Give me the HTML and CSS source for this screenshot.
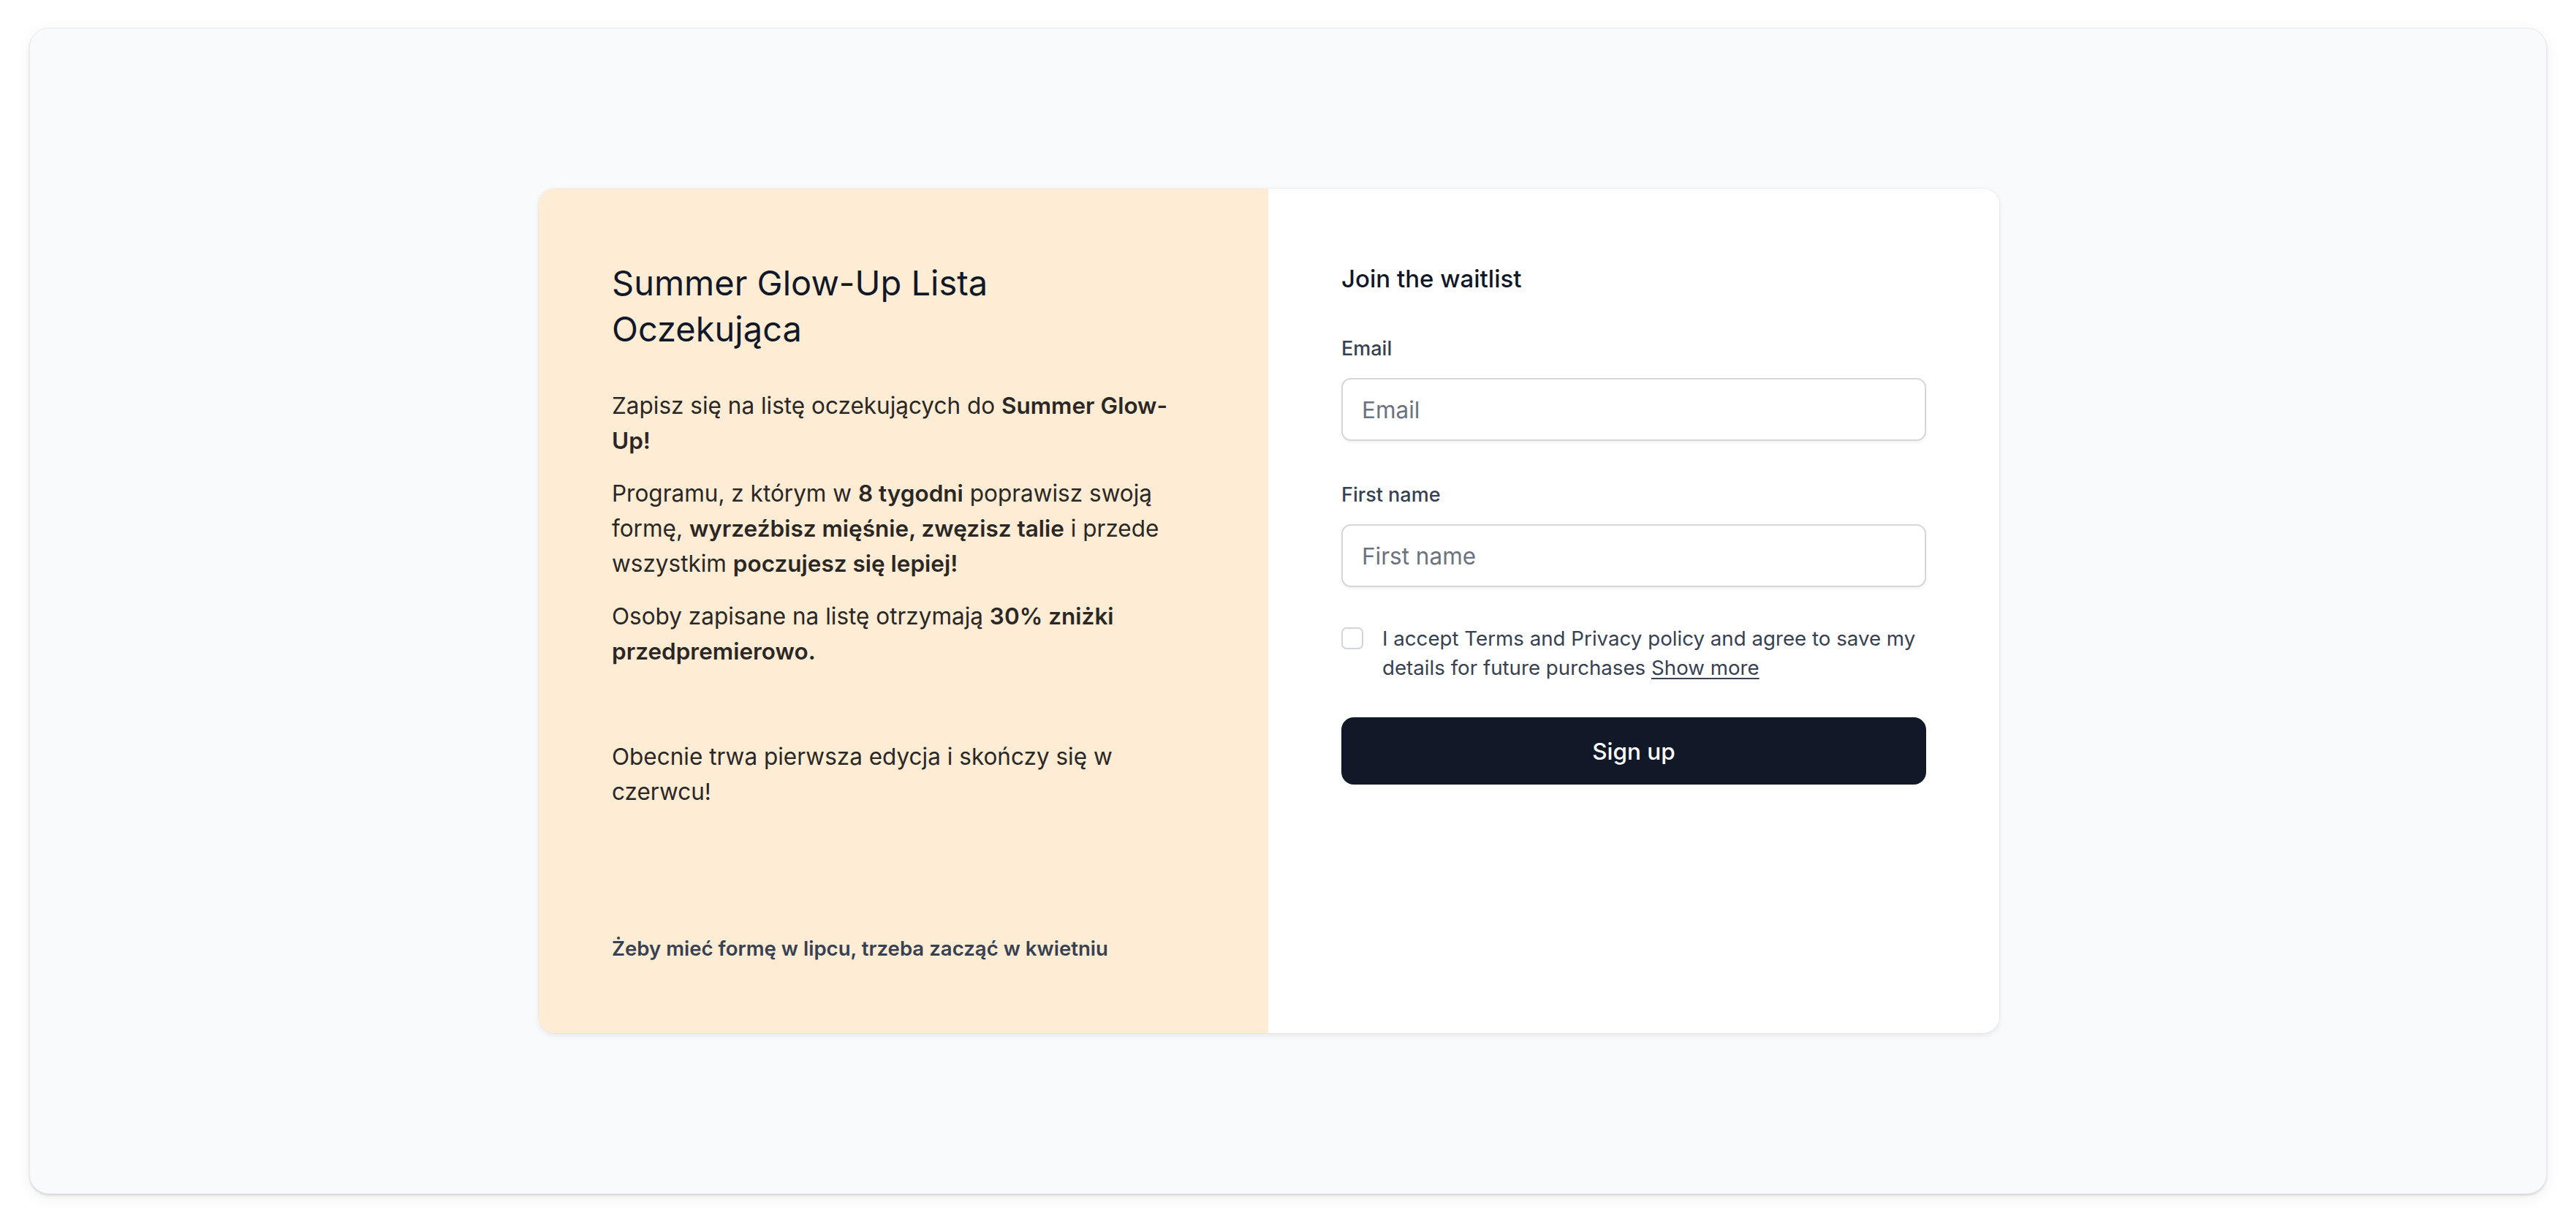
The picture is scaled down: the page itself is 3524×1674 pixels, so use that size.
FILE: index.html
```html
<!DOCTYPE html>
<html lang="pl">
<head>
<meta charset="utf-8">
<title>Summer Glow-Up Lista Oczekująca</title>
<link rel="stylesheet" href="styles.css">
</head>
<body>
<div class="frame">
  <div class="card">
    <section class="intro">
      <h1 class="intro-title">Summer Glow-Up Lista Oczekująca</h1>
      <p class="intro-text">Zapisz się na listę oczekujących do <strong>Summer Glow-</strong><strong>Up!</strong></p>
      <p class="intro-text"><span>Programu, z którym w </span><strong>8 tygodni</strong><span> poprawisz swoją</span> <span>formę, </span><strong>wyrzeźbisz mięśnie, zwęzisz talie</strong><span> i przede</span> <span>wszystkim </span><strong>poczujesz się lepiej!</strong></p>
      <p class="intro-text"><span>Osoby zapisane na listę otrzymają </span><strong>30% zniżki</strong> <strong>przedpremierowo.</strong></p>
      <div class="intro-spacer"></div>
      <p class="intro-text"><span>Obecnie trwa pierwsza edycja i skończy się w</span> <span>czerwcu!</span></p>
      <p class="intro-footer">Żeby mieć formę w lipcu, trzeba zacząć w kwietniu</p>
    </section>
    <section class="signup">
      <h2 class="signup-title">Join the waitlist</h2>
      <form class="signup-form">
        <label class="field">
          <span class="field-label">Email</span>
          <input class="field-input" type="email" placeholder="Email">
        </label>
        <label class="field">
          <span class="field-label">First name</span>
          <input class="field-input" type="text" placeholder="First name">
        </label>
        <label class="consent">
          <span class="consent-box"></span>
          <span class="consent-text"><span>I accept Terms and Privacy policy and agree to save my</span> <span>details for future purchases</span> <span class="consent-link">Show more</span></span>
        </label>
        <button class="submit" type="button">Sign up</button>
      </form>
    </section>
  </div>
</div>
</body>
</html>
```

FILE: styles.css
```css
* { box-sizing: border-box; }

html, body {
  margin: 0;
  background: #ffffff;
}

body {
  min-height: 100vh;
  padding: 38px 40px 41px;
  display: flex;
  font-family: Inter, "Noto Sans", sans-serif;
}

.frame {
  flex: 1;
  background: #f9fafb;
  border: 1px solid #e8eaee;
  border-radius: 27px;
  box-shadow: 0 2px 3px rgba(0, 0, 0, 0.13), 0 6px 22px rgba(0, 0, 0, 0.06);
  display: flex;
  align-items: center;
  justify-content: center;
  padding-right: 52px;
}

.card {
  width: 1998px;
  display: grid;
  grid-template-columns: 998px 1000px;
  background: #ffffff;
  border-radius: 22px;
  overflow: hidden;
  box-shadow: 0 0 0 1px rgba(0, 0, 0, 0.03), 0 3px 8px rgba(0, 0, 0, 0.08);
}

/* left panel */
.intro {
  background: #ffecd5;
  padding: 97px 100px 96px 100px;
  display: flex;
  flex-direction: column;
}

.intro-title {
  margin: 0 0 50px;
  font-size: 47px;
  line-height: 63px;
  font-weight: 400;
  color: #111827;
  max-width: 640px;
}

.intro-text {
  margin: 0 0 24px;
  font-size: 31.5px;
  line-height: 48px;
  color: #2b2724;
  max-width: 790px;
}

.intro-text strong {
  font-weight: 600;
}

.intro-spacer {
  height: 48px;
  margin-bottom: 24px;
}

.intro-footer {
  margin: 146px 0 0;
  font-size: 27.6px;
  line-height: 40px;
  font-weight: 600;
  color: #374151;
}

/* right panel */
.signup {
  padding: 99px 100px 96px 100px;
}

.signup-title {
  margin: 0 0 51px;
  font-size: 33px;
  line-height: 49px;
  font-weight: 500;
  color: #111827;
}

.signup-form {
  display: flex;
  flex-direction: column;
}

.field {
  display: flex;
  flex-direction: column;
  gap: 20px;
  margin-bottom: 54px;
}

.field-label {
  font-size: 27px;
  line-height: 40px;
  font-weight: 500;
  color: #374151;
}

.field-input {
  height: 86px;
  width: 100%;
  border: 2px solid #d4d6db;
  border-radius: 13px;
  padding: 0 26px;
  font-family: inherit;
  font-size: 31.5px;
  color: #111827;
  background: #ffffff;
  box-shadow: 0 2px 4px rgba(0, 0, 0, 0.06);
  outline: none;
}

.field-input::placeholder {
  color: #6b7280;
}

.consent {
  display: flex;
  align-items: flex-start;
  gap: 26px;
  margin-top: -4px;
  margin-bottom: 48px;
}

.consent-box {
  flex: none;
  width: 30px;
  height: 30px;
  margin-top: 5px;
  border: 2px solid #d1d5db;
  border-radius: 7px;
  background: #ffffff;
}

.consent-text {
  font-size: 27.7px;
  line-height: 40px;
  color: #374151;
}

.consent-link {
  text-decoration: underline;
  text-underline-offset: 4px;
}

.submit {
  height: 92px;
  width: 100%;
  border: 0;
  border-radius: 17px;
  background: #111827;
  color: #ffffff;
  font-family: inherit;
  font-size: 31.5px;
  font-weight: 500;
}
```
